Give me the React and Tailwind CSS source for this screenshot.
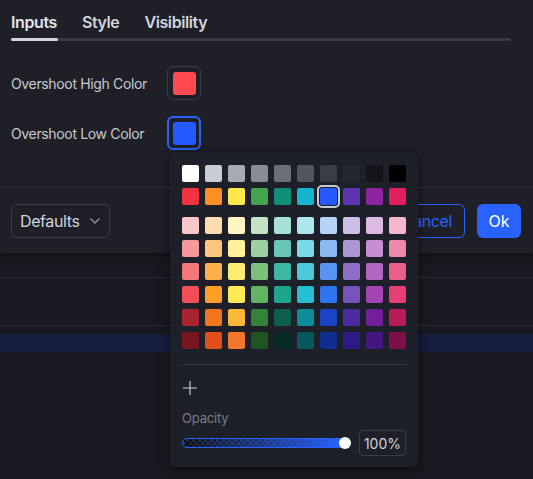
import React from 'react';

const palette = [
  ['#ffffff', '#caccd4', '#a8aab1', '#8a8c93', '#6c6e78', '#53555e', '#3a3c45', '#24262d', '#13151b', '#000000'],
  ['#ef3340', '#ff8f26', '#ffe84a', '#45a54f', '#128f78', '#13b5cf', '#2659ff', '#5d35b0', '#8e239f', '#e11f5d'],
  ['#f9c7ca', '#ffdcb0', '#fff6c3', '#c3e2c6', '#a6e0d6', '#ade6ee', '#b6d3f8', '#ccc0e6', '#ddbae2', '#f4b6cc'],
  ['#f6999d', '#ffc67d', '#fff199', '#9ed1a1', '#6ac7b7', '#7bd9e5', '#8ab9f4', '#ab96d4', '#c88ed3', '#ef89ab'],
  ['#f4777b', '#ffb14c', '#ffed73', '#7bc17e', '#3eb6a1', '#49c9da', '#5895f1', '#8e6ec6', '#b265c1', '#ec5e8c'],
  ['#f34c59', '#ffa026', '#ffea55', '#61b464', '#20a48e', '#24bfd3', '#2e74ee', '#7852bc', '#a444b6', '#e73d75'],
  ['#a82530', '#f27520', '#fbb93a', '#33833a', '#0c5e4f', '#0d8c9a', '#1a43c3', '#4c2b9e', '#741d9a', '#b91b56'],
  ['#76171f', '#e24f1b', '#f2772d', '#1d5623', '#032b24', '#07575c', '#0e2f90', '#2e1a86', '#441682', '#7e0f4b'],
];

function Swatch({ color, selected }) {
  return (
    <div className="relative w-[17px] h-[17px]">
      <div className="w-full h-full rounded-[2px]" style={{ background: color }} />
      {selected && <div className="absolute -inset-[3px] rounded-[5px] border-2 border-[#c9cbd2]" />}
    </div>
  );
}

function ColorRow({ label, color, active }) {
  return (
    <div className="flex items-center">
      <span className="w-[156px] text-[14px] tracking-[-0.35px] text-[#c8cad1]">{label}</span>
      <div
        className={
          active
            ? 'w-[34px] h-[34px] rounded-[6px] border-2 border-[#2962ff] flex items-center justify-center'
            : 'w-[34px] h-[34px] rounded-[6px] border border-[#3a3c46] flex items-center justify-center'
        }
      >
        <div className="w-[23px] h-[23px] rounded-[3px]" style={{ background: color }} />
      </div>
    </div>
  );
}

export default function App() {
  return (
    <div className="relative w-[533px] h-[479px] overflow-hidden bg-[#181920] font-['Inter',sans-serif]">
      {/* dialog */}
      <div className="bg-[#1e1f27] shadow-[0_2px_6px_rgba(0,0,0,0.35)]">
        <div className="px-[11px] pt-[10px] pr-[22px]">
          <div className="flex h-[24px] items-center gap-[25px] text-[16px] font-semibold tracking-[-0.4px]">
            <span className="text-[#e0e3eb]">Inputs</span>
            <span className="text-[#d1d4dc]">Style</span>
            <span className="text-[#d1d4dc]">Visibility</span>
          </div>
          <div className="mt-[4px] h-[3px] rounded-full bg-[#383a43]">
            <div className="h-full w-[47px] rounded-full bg-[#d1d4dc]" />
          </div>
          <div className="flex flex-col gap-[16px] pt-[25px] pb-[37px]">
            <ColorRow label="Overshoot High Color" color="#ff4a4f" />
            <ColorRow label="Overshoot Low Color" color="#2459ff" active />
          </div>
        </div>

        <div className="flex items-center justify-between border-t border-[#2c2e37] px-[11px] pr-[12px] pt-[16px] pb-[15px]">
          <button className="flex h-[34px] w-[99px] items-center justify-between rounded-[6px] border border-[#3a3c46] pl-[8px] pr-[9px] text-[16px] tracking-[-0.4px] text-[#d1d4dc]">
            Defaults
            <svg width="10" height="6" viewBox="0 0 10 6" fill="none">
              <path d="M1 1l4 4 4-4" stroke="#9598a1" strokeWidth="1.3" strokeLinecap="round" strokeLinejoin="round" />
            </svg>
          </button>
          <div className="flex gap-[12px]">
            <button className="h-[34px] rounded-[6px] border border-[#2962ff] px-[12px] text-[16px] tracking-[-0.4px] text-[#2962ff]">Cancel</button>
            <button className="h-[34px] w-[44px] rounded-[6px] bg-[#2962ff] text-[16px] text-white">Ok</button>
          </div>
        </div>
      </div>

      {/* page behind */}
      <div className="h-[25px] border-b border-[#2a2c35]" />
      <div className="h-[48px] border-b border-[#2a2c35]" />
      <div className="mt-[8px] h-[18px] bg-[#141d3b]" />

      {/* color picker popover */}
      <div className="absolute left-[170px] top-[152px] w-[248px] rounded-[6px] bg-[#1e2029] px-[12px] pt-[13px] pb-[11px] shadow-[0_2px_12px_rgba(0,0,0,0.45)]">
        <div className="flex flex-col gap-[6px]">
          {palette.slice(0, 2).map((row, r) => (
            <div key={r} className="flex gap-[6px]">
              {row.map((c, i) => (
                <Swatch key={i} color={c} selected={r === 1 && i === 6} />
              ))}
            </div>
          ))}
        </div>
        <div className="mt-[12px] flex flex-col gap-[6px]">
          {palette.slice(2).map((row, r) => (
            <div key={r} className="flex gap-[6px]">
              {row.map((c, i) => (
                <Swatch key={i} color={c} />
              ))}
            </div>
          ))}
        </div>
        <div className="mt-[15px] h-px bg-[#363841]" />
        <svg className="mt-[16px] ml-px" width="14" height="14" viewBox="0 0 14 14" fill="none">
          <path d="M7 0v14M0 7h14" stroke="#d1d4dc" strokeWidth="1.1" />
        </svg>
        <div className="mt-[15px] h-[16px] text-[13px] leading-[16px] tracking-[-0.2px] text-[#787b86]">Opacity</div>
        <div className="mt-[4px] flex items-center gap-[8px]">
          <div className="relative h-[26px] w-[169px] flex items-center">
            <div className="h-[10px] w-[163px] rounded-full border border-[#2962ff] [background-image:linear-gradient(to_right,rgba(41,98,255,0),#2962ff),repeating-conic-gradient(#23252d_0%_25%,#0b0c10_0%_50%)] [background-size:auto,6px_6px]" />
            <div className="absolute right-0 top-[7px] h-[12px] w-[12px] rounded-full bg-white" />
          </div>
          <div className="flex h-[26px] w-[47px] items-center justify-end rounded-[4px] border border-[#3a3c46] pr-[4px] text-[14px] text-[#d1d4dc]">
            100%
          </div>
        </div>
      </div>
    </div>
  );
}
